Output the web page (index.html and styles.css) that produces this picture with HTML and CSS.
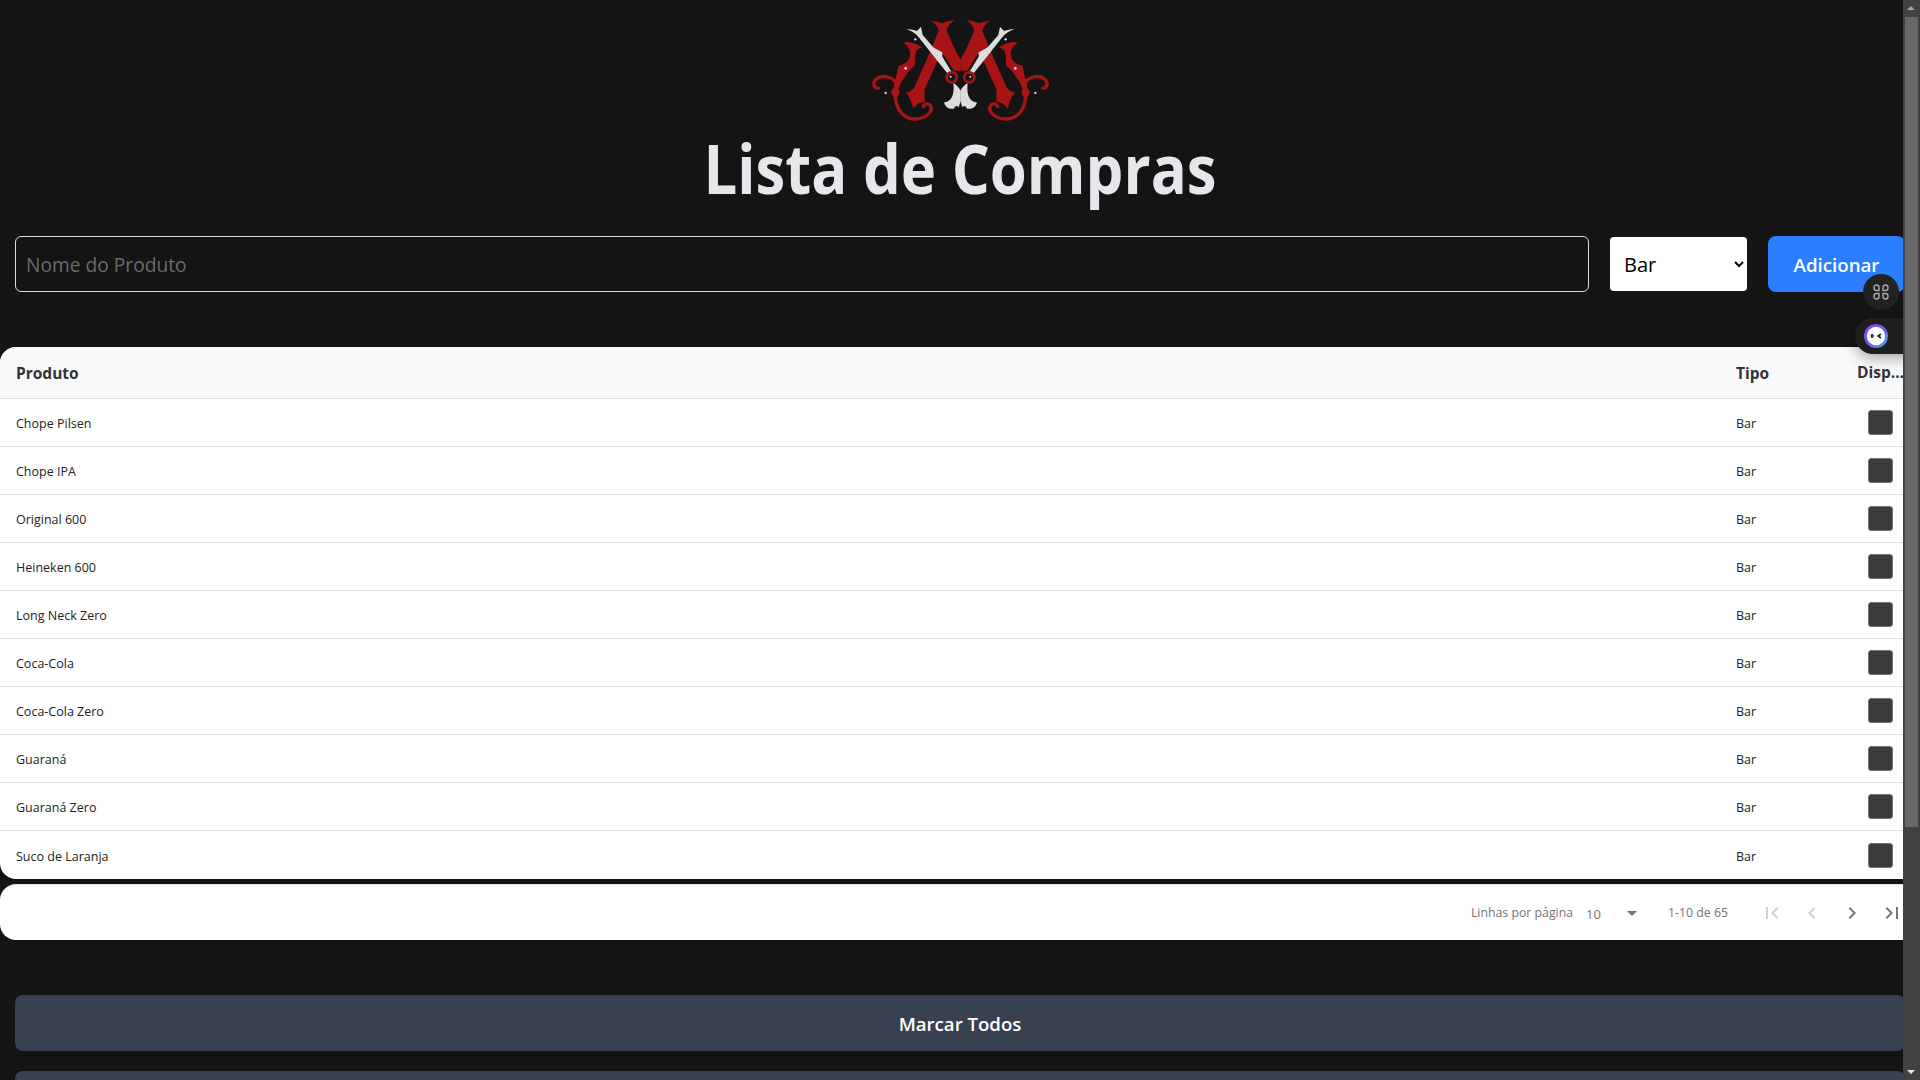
FILE: index.html
```html
<!DOCTYPE html>
<html lang="pt-BR">
<head>
  <meta charset="UTF-8">
  <meta name="viewport" content="width=device-width, initial-scale=1.0">
  <title>Lista de Compras</title>
  <link rel="stylesheet" href="styles.css">
</head>
<body>
  <svg class="logo" viewBox="0 0 720 405">
    <defs>
      <g id="half">
        <!-- scroll on the side -->
        <path class="curl" d="M166 288C168 335 195 358 228 357C258 355 280 335 272 318C266 308 252 310 250 320"/>
        <path class="curl" d="M172 258C165 232 130 222 112 235C96 245 100 265 115 265"/>
        <circle class="red" cx="166" cy="277" r="12"/>
        <path class="red" d="M190 128C205 122 228 128 247 143C235 143 226 152 226 165C224 180 228 190 222 200C210 205 200 225 188 240C178 255 172 275 172 295L160 295C158 270 162 245 170 225C172 215 172 205 176 198C188 195 200 190 208 175C214 160 210 140 190 128Z"/>
        <!-- leg of the M -->
        <path class="red" d="M273 63C288 63 298 66 306 70C318 64 330 62 343 60C332 70 322 78 320 92L343 145L362 180V212H342L305 155L254 268C254 280 252 296 255 306C240 306 230 312 220 326C216 312 212 295 198 277C208 276 216 272 222 264L275 145L296 92C294 80 285 70 273 63Z"/>
        <!-- blade -->
        <path class="white" d="M200 87C212 88 222 90 230 93C234 90 238 85 243 80C245 88 246 97 248 105L280 142C290 148 298 152 308 158C306 164 306 168 308 172L335 216L322 220L290 180L235 110C226 100 214 92 200 87Z"/>
        <circle class="ring" cx="335" cy="232" r="15"/>
        <circle class="dot" cx="332" cy="230" r="3"/>
        <path class="white" d="M340 250C348 252 355 262 362 272V303L356 322C350 316 346 316 342 326C330 328 318 325 312 308C328 305 345 295 340 250Z"/>
        <circle class="dot" cx="226" cy="118" r="3.5"/>
        <circle class="dot" cx="197" cy="205" r="4"/>
        <circle class="dot" cx="137" cy="279" r="3.5"/>
      </g>
    </defs>
    <use href="#half"/>
    <use href="#half" transform="translate(723 0) scale(-1 1)"/>
  </svg>
  <h1 class="title">Lista de Compras</h1>

  <form class="add-form">
    <input class="name-input" type="text" placeholder="Nome do Produto">
    <select class="type-select">
      <option>Bar</option>
    </select>
    <button class="add-btn" type="button">Adicionar</button>
  </form>

  <div class="table">
    <div class="row head">
      <div class="cell">Produto</div>
      <div class="cell">Tipo</div>
      <div class="cell ellipsis">Disponível</div>
    </div>
    <div class="row"><div class="cell">Chope Pilsen</div><div class="cell">Bar</div><div class="cell check"><input type="checkbox"></div></div>
    <div class="row"><div class="cell">Chope IPA</div><div class="cell">Bar</div><div class="cell check"><input type="checkbox"></div></div>
    <div class="row"><div class="cell">Original 600</div><div class="cell">Bar</div><div class="cell check"><input type="checkbox"></div></div>
    <div class="row"><div class="cell">Heineken 600</div><div class="cell">Bar</div><div class="cell check"><input type="checkbox"></div></div>
    <div class="row"><div class="cell">Long Neck Zero</div><div class="cell">Bar</div><div class="cell check"><input type="checkbox"></div></div>
    <div class="row"><div class="cell">Coca-Cola</div><div class="cell">Bar</div><div class="cell check"><input type="checkbox"></div></div>
    <div class="row"><div class="cell">Coca-Cola Zero</div><div class="cell">Bar</div><div class="cell check"><input type="checkbox"></div></div>
    <div class="row"><div class="cell">Guaraná</div><div class="cell">Bar</div><div class="cell check"><input type="checkbox"></div></div>
    <div class="row"><div class="cell">Guaraná Zero</div><div class="cell">Bar</div><div class="cell check"><input type="checkbox"></div></div>
    <div class="row last"><div class="cell">Suco de Laranja</div><div class="cell">Bar</div><div class="cell check"><input type="checkbox"></div></div>
  </div>

  <div class="pager">
    <span>Linhas por página</span>
    <div class="per-page">
      <span>10</span>
      <svg viewBox="0 0 24 24"><path d="M7 10l5 5 5-5z"/></svg>
    </div>
    <span class="range">1-10 de 65</span>
    <div class="pager-btns">
      <button class="page-btn off" type="button"><svg viewBox="0 0 24 24"><path d="M18.41 16.59L13.82 12l4.59-4.59L17 6l-6 6 6 6zM6 6h2v12H6z"/></svg></button>
      <button class="page-btn off" type="button"><svg viewBox="0 0 24 24"><path d="M15.41 7.41L14 6l-6 6 6 6 1.41-1.41L10.83 12z"/></svg></button>
      <button class="page-btn" type="button"><svg viewBox="0 0 24 24"><path d="M10 6L8.59 7.41 13.17 12l-4.58 4.59L10 18l6-6z"/></svg></button>
      <button class="page-btn" type="button"><svg viewBox="0 0 24 24"><path d="M5.59 7.41L10.18 12l-4.59 4.59L7 18l6-6-6-6zM16 6h2v12h-2z"/></svg></button>
    </div>
  </div>

  <div class="actions">
    <button class="action-btn" type="button">Marcar Todos</button>
    <button class="action-btn" type="button"></button>
  </div>

  <!-- browser extension widgets -->
  <div class="ext-grid">
    <svg viewBox="0 0 18 18" width="18" height="18">
      <path d="M2 4.5a2.5 2.5 0 0 1 5 0V7.5H4.5A2.5 2.5 0 0 1 2 5Z"/>
      <path d="M16 4.5a2.5 2.5 0 0 0-5 0V7.5h2.5A2.5 2.5 0 0 0 16 5Z"/>
      <path d="M2 13.5a2.5 2.5 0 0 0 5 0V10.5H4.5A2.5 2.5 0 0 0 2 13Z"/>
      <path d="M16 13.5a2.5 2.5 0 0 1-5 0V10.5h2.5A2.5 2.5 0 0 1 16 13Z"/>
    </svg>
  </div>
  <div class="ext-pill">
    <svg viewBox="0 0 24 24" width="24" height="24">
      <defs>
        <linearGradient id="ring" x1="0" y1="0" x2="1" y2="1">
          <stop offset="0" stop-color="#8a3ff0"/>
          <stop offset="0.55" stop-color="#6a5cf0"/>
          <stop offset="1" stop-color="#2fc0e8"/>
        </linearGradient>
      </defs>
      <circle cx="12" cy="12" r="12" fill="url(#ring)"/>
      <circle cx="12" cy="12" r="9.2" fill="#fff"/>
      <rect x="6.8" y="10" width="2.6" height="4" rx="1.3" fill="#222"/>
      <path d="M17 10L14.2 12L17 14" fill="none" stroke="#222" stroke-width="1.8"/>
    </svg>
  </div>

  <div class="scrollbar">
    <div class="arrow up"></div>
    <div class="thumb"></div>
    <div class="arrow down"></div>
  </div>
</body>
</html>
```

FILE: styles.css
```css
html, body {
  margin: 0;
  height: 1080px;
  overflow: hidden;
}
body {
  width: 1920px;
  background-color: #141414;
  font-family: "Open Sans", "Noto Sans", sans-serif;
  color: #e5e7eb;
}
.logo {
  display: block;
  width: 240px;
  height: 135px;
  margin: 0 auto;
}
.red { fill: #a81414; }
.white { fill: #dcdcdc; }
.dot { fill: #dcdcdc; }
.curl { fill: none; stroke: #a81414; stroke-width: 10; stroke-linecap: round; }
.ring { fill: none; stroke: #a81414; stroke-width: 8; }

.title {
  margin: 0;
  height: 81px;
  font-size: 68px;
  line-height: 65px;
  font-weight: 700;
  text-align: center;
  transform: scaleX(0.88);
}

.add-form {
  display: flex;
  align-items: center;
  gap: 21px;
  padding: 0 15px;
  margin-top: 20px;
}
.name-input {
  flex: 1;
  height: 56px;
  box-sizing: border-box;
  padding: 0 10px;
  background: transparent;
  border: 1px solid #dcdcdc;
  border-radius: 6px;
  font-family: inherit;
  font-size: 19.2px;
  color: #fff;
}
.name-input::placeholder { color: #6b6b6b; }
.type-select {
  width: 137px;
  height: 54px;
  box-sizing: border-box;
  padding: 0 10px;
  background-color: #fff;
  border: none;
  border-radius: 4px;
  font-family: inherit;
  font-size: 20px;
  color: #000;
}
.add-btn {
  width: 137px;
  height: 56px;
  background-color: #2b7fff;
  border: none;
  border-radius: 8px;
  font-family: inherit;
  font-size: 18.7px;
  font-weight: 600;
  color: #fff;
}

.table {
  margin-top: 55px;
  background-color: #fff;
  border-radius: 16px;
  overflow: hidden;
  font-size: 12.5px;
  color: #222;
}
.row {
  display: grid;
  grid-template-columns: 1fr 120px 79px;
  height: 48px;
  box-sizing: border-box;
  border-bottom: 1px solid #e0e0e0;
}
.row.last { border-bottom: none; }
.row.head {
  height: 52px;
  background-color: #f8f9fa;
  font-size: 15.5px;
  font-weight: 700;
  color: #333;
}
.cell {
  display: flex;
  align-items: center;
  padding: 2px 16px 0;
  min-width: 0;
}
.cell:nth-child(2) { padding-left: 15px; }
.row.head .cell { padding-top: 0; }
.cell.ellipsis {
  display: block;
  padding-right: 14px;
  line-height: 51px;
  white-space: nowrap;
  overflow: hidden;
  text-overflow: ellipsis;
}
.cell.check {
  justify-content: center;
  padding: 0;
}
.cell.check input {
  appearance: none;
  margin: 0;
  width: 25px;
  height: 25px;
  background-color: #3b3b3b;
  border: 1px solid #767676;
  border-radius: 3px;
}

.pager {
  display: flex;
  align-items: center;
  justify-content: flex-end;
  height: 56px;
  margin-top: 5px;
  padding-right: 8px;
  background-color: #fff;
  border-top: 1px solid #e0e0e0;
  box-sizing: border-box;
  border-radius: 16px;
  font-size: 12.3px;
  color: #757575;
}
.per-page {
  display: flex;
  align-items: center;
  width: 58px;
  margin-left: 13px;
}
.per-page span { flex: 1; padding-top: 2px; font-size: 13px; }
.per-page svg { width: 24px; height: 24px; fill: #757575; flex: none; }
.range { margin-left: 24px; }
.pager-btns { display: flex; margin-left: 24px; }
.page-btn {
  display: flex;
  align-items: center;
  justify-content: center;
  width: 40px;
  height: 40px;
  padding: 0;
  background: none;
  border: none;
}
.page-btn svg { width: 24px; height: 24px; fill: rgba(0, 0, 0, 0.54); }
.page-btn.off svg { fill: rgba(0, 0, 0, 0.18); }

.actions {
  display: flex;
  flex-direction: column;
  gap: 20px;
  padding: 0 15px;
  margin-top: 55px;
}
.action-btn {
  flex: none;
  height: 56px;
  background-color: #374151;
  border: none;
  border-radius: 8px;
  font-family: inherit;
  font-size: 18.6px;
  font-weight: 600;
  color: #fff;
}

.ext-grid {
  position: fixed;
  top: 274px;
  left: 1863px;
  display: flex;
  align-items: center;
  justify-content: center;
  width: 36px;
  height: 36px;
  background-color: #222;
  border-radius: 50%;
}
.ext-grid path { fill: none; stroke: #aaa; stroke-width: 1.4; }
.ext-pill {
  position: fixed;
  top: 318px;
  left: 1855px;
  display: flex;
  align-items: center;
  width: 80px;
  height: 36px;
  padding-left: 9px;
  box-sizing: border-box;
  background-color: #1e1e1e;
  border-radius: 18px;
  box-shadow: 0 4px 14px rgba(0, 0, 0, 0.35);
}

.scrollbar {
  position: fixed;
  top: 0;
  right: 0;
  width: 17px;
  height: 1080px;
  background-color: #424242;
}
.thumb {
  position: absolute;
  top: 17px;
  left: 2px;
  width: 13px;
  height: 810px;
  background-color: #686868;
}
.arrow {
  position: absolute;
  left: 4px;
  width: 0;
  height: 0;
  border-left: 4px solid transparent;
  border-right: 4px solid transparent;
}
.arrow.up { top: 6px; border-bottom: 4px solid #a3a3a3; }
.arrow.down { bottom: 6px; border-top: 4px solid #e8e8e8; }
```
